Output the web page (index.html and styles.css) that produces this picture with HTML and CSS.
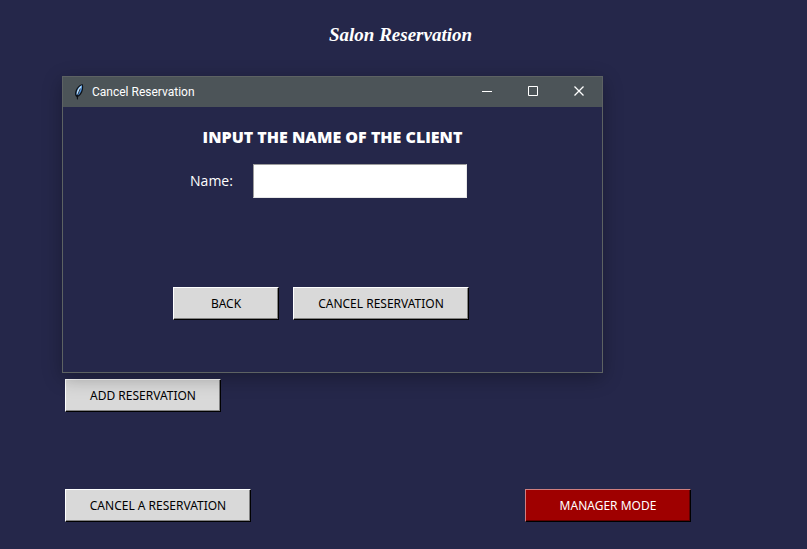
FILE: index.html
```html
<!DOCTYPE html>
<html lang="en">
<head>
<meta charset="utf-8">
<title>Salon Reservation</title>
<link rel="stylesheet" href="styles.css">
</head>
<body>
<main class="app">
  <h1 class="app-title">Salon Reservation</h1>
  <div class="actions">
    <button class="btn btn-add" type="button">ADD RESERVATION</button>
    <div class="action-row">
      <button class="btn btn-cancel" type="button">CANCEL A RESERVATION</button>
      <button class="btn btn-manager" type="button">MANAGER MODE</button>
    </div>
  </div>
</main>
<section class="dialog" role="dialog" aria-labelledby="dialog-title">
  <header class="titlebar">
    <svg class="feather" width="16" height="16" viewBox="0 0 16 16" aria-hidden="true">
      <path d="M6 15.500 5.800 13C3.500 12 3.600 8 5.500 4.800 7 2.200 9.500.2 11.800.2 12.800 3.500 12 7.500 9.800 10.500 8.900 11.800 7.800 12.500 7 12.800L6.800 15.500z" fill="#0c1015"/>
      <path d="M5.600 11C4.800 7 7.500 2.200 11 1.200 11.500 4.500 10 9 7.200 11.300z" fill="#4a8fdc"/>
      <path d="M5.800 10.500C5.600 7 8 3 10.600 1.600 10.200 4.500 8.200 8 6.500 10.800z" fill="#c6e4fa"/>
      <path d="M6.300 14.500 6.600 11 9.300 4.500" fill="none" stroke="#0c1015" stroke-width=".8"/>
    </svg>
    <h2 class="titlebar-text" id="dialog-title">Cancel Reservation</h2>
    <button class="win-btn" type="button" aria-label="Minimize"><svg width="12" height="12" viewBox="0 0 12 12"><path d="M1 5.500h10"/></svg></button>
    <button class="win-btn" type="button" aria-label="Maximize"><svg width="12" height="12" viewBox="0 0 12 12"><path d="M1.500.5h9v9h-9z"/></svg></button>
    <button class="win-btn" type="button" aria-label="Close"><svg width="12" height="12" viewBox="0 0 12 12"><path d="m1.500.5 9 9m0-9-9 9" stroke-width="1.300"/></svg></button>
  </header>
  <form class="dialog-body">
    <h3 class="prompt">INPUT THE NAME OF THE CLIENT</h3>
    <div class="field">
      <label for="client">Name:</label>
      <input id="client" type="text">
    </div>
    <div class="dialog-actions">
      <button class="btn btn-back" type="button">BACK</button>
      <button class="btn btn-confirm" type="button">CANCEL RESERVATION</button>
    </div>
  </form>
</section>
</body>
</html>
```
FILE: styles.css
```css
* { box-sizing: border-box; }

body {
  margin: 0;
  min-height: 100vh;
  background: #25274a;
  color: #fff;
  font-family: Tahoma, "Noto Sans", sans-serif;
}

h1, h2, h3 { margin: 0; }

.app {
  display: flex;
  flex-direction: column;
  justify-content: space-between;
  min-height: 100vh;
  padding: 23px 116px 27px 65px;
}

.app-title {
  margin-right: -45px;
  text-align: center;
  font: italic bold 19px/24px "Script MT Bold", "Brush Script MT", "Liberation Serif", cursive;
}

.actions {
  display: flex;
  flex-direction: column;
  align-items: flex-start;
  gap: 77px;
}

.action-row {
  display: flex;
  justify-content: space-between;
  width: 100%;
}

.btn {
  height: 33px;
  padding: 0;
  border: 1px solid;
  border-color: #fff #000 #000 #fff;
  box-shadow: inset -1px -1px #828282;
  background: #d9d9d9;
  color: #000;
  font: 12px/16px Tahoma, "Noto Sans", sans-serif;
}

.btn-add { width: 156px; }
.btn-cancel { width: 186px; }
.btn-back { width: 106px; }
.btn-confirm { width: 176px; }

.btn-manager {
  width: 166px;
  border-color: #d07f7f #000 #000 #d07f7f;
  box-shadow: inset -1px -1px #600000;
  background: #9f0000;
  color: #fff;
}

.dialog {
  position: absolute;
  top: 76px;
  left: 62px;
  right: 204px;
  border: 1px solid #5d6263;
  background: #25274a;
  box-shadow: 0 5px 18px rgba(0, 0, 0, .3);
}

.titlebar {
  display: flex;
  align-items: center;
  height: 30px;
  padding-left: 8px;
  background: #4c5458;
}

.titlebar-text {
  flex: 1;
  margin-left: 5px;
  font: 12px/16px "Segoe UI", Roboto, sans-serif;
}

.win-btn {
  display: flex;
  align-items: center;
  justify-content: center;
  width: 46px;
  height: 30px;
  padding: 0;
  border: 0;
  background: none;
}

.win-btn svg {
  fill: none;
  stroke: #fff;
}

.dialog-body {
  display: flex;
  flex-direction: column;
  align-items: center;
  padding: 20px 0 52px;
}

.prompt {
  font: 800 16px/20px "Segoe UI Black", "Open Sans", sans-serif;
}

.field {
  display: flex;
  align-items: center;
  gap: 20px;
  margin: 17px 8px 0 0;
  font: 14px/20px "Segoe UI", "Open Sans", sans-serif;
}

.field input {
  width: 214px;
  height: 34px;
  padding: 0 4px;
  border: 1px solid;
  border-color: #9c9c9c #e8e8e8 #e8e8e8 #9c9c9c;
  border-radius: 0;
  background: #fff;
  font: inherit;
}

.dialog-actions {
  display: flex;
  gap: 14px;
  margin: 89px 23px 0 0;
}
```
